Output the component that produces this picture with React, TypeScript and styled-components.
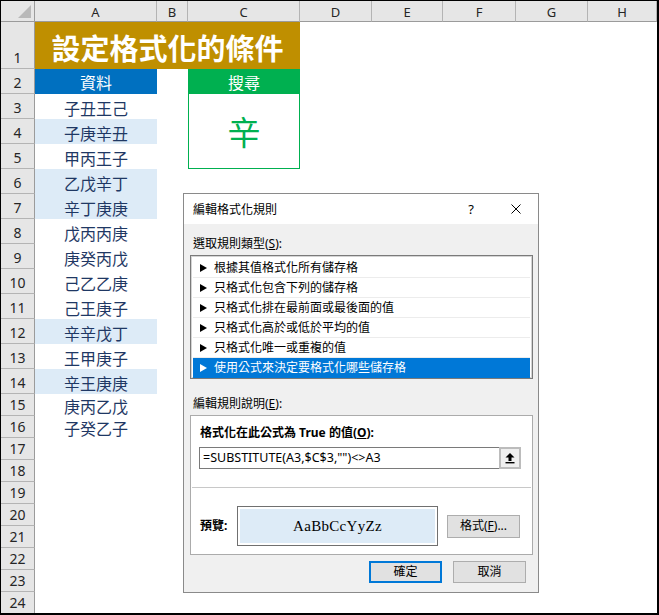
import React from "react";
import styled, { createGlobalStyle } from "styled-components";

const GlobalStyle = createGlobalStyle`
  html, body { margin: 0; padding: 0; background: #fff; }
  body { font-family: "Noto Sans", "Noto Sans CJK TC", sans-serif; }
  * { box-sizing: border-box; }
`;

const COLS = [34, 122, 31, 112, 72, 71, 73, 72, 69];
const ROWS = [21, 47, 25, ...Array(12).fill(25), ...Array(10).fill(22)];
const LETTERS = ["A", "B", "C", "D", "E", "F", "G", "H"];
const DATA = [
  "子丑王己", "子庚辛丑", "甲丙王子", "乙戊辛丁", "辛丁庚庚", "戊丙丙庚", "庚癸丙戊",
  "己乙乙庚", "己王庚子", "辛辛戊丁", "王甲庚子", "辛王庚庚", "庚丙乙戊", "子癸乙子",
];
const RULES = [
  "根據其值格式化所有儲存格",
  "只格式化包含下列的儲存格",
  "只格式化排在最前面或最後面的值",
  "只格式化高於或低於平均的值",
  "只格式化唯一或重複的值",
  "使用公式來決定要格式化哪些儲存格",
];

const CJK = `"Noto Sans CJK TC", "Noto Sans", sans-serif`;

const Frame = styled.div`
  position: relative;
  width: 659px;
  height: 615px;
  border: 1px solid #000;
  border-right-width: 2px;
  border-bottom-width: 2px;
  overflow: hidden;
  background: #fff;
`;

const Sheet = styled.div`
  display: grid;
  grid-template-columns: ${COLS.map((c) => `${c}px`).join(" ")};
  grid-template-rows: ${ROWS.map((r) => `${r}px`).join(" ")};
`;

type Place = { $c: number; $r: number; $cs?: number; $rs?: number };

const Cell = styled.div<Place>`
  grid-column: ${(p) => p.$c} / span ${(p) => p.$cs ?? 1};
  grid-row: ${(p) => p.$r} / span ${(p) => p.$rs ?? 1};
  min-width: 0;
  min-height: 0;
  display: flex;
  align-items: center;
  justify-content: center;
`;

const Corner = styled(Cell)`
  position: relative;
  background: #e6e6e6;
  border-right: 1px solid #9b9b9b;
  border-bottom: 1px solid #9b9b9b;
  align-items: flex-end;
  justify-content: flex-end;
  padding: 0 3px 3px 0;
`;

const ColHead = styled(Cell)`
  background: #e6e6e6;
  border-right: 1px solid #b4b4b4;
  border-bottom: 1px solid #9b9b9b;
  font-family: "Noto Sans", sans-serif;
  font-size: 13px;
  color: #262626;
  line-height: 16px;
  padding-top: 1px;
`;

const RowHead = styled(Cell)`
  background: #e6e6e6;
  border-right: 1px solid #9b9b9b;
  border-bottom: 1px solid #b4b4b4;
  font-family: "Noto Sans", sans-serif;
  font-size: 14px;
  color: #262626;
  line-height: 16px;
  align-items: flex-end;
  padding-bottom: 2px;
`;

const TitleCell = styled(Cell)`
  background: #bf8f00;
  color: #fff;
  font-family: ${CJK};
  font-weight: 700;
  font-size: 29px;
  line-height: 34px;
  padding-top: 2px;
`;

const HeadCell = styled(Cell)<{ $bg: string }>`
  background: ${(p) => p.$bg};
  color: #fff;
  font-family: ${CJK};
  font-size: 16px;
  line-height: 20px;
`;

const DataCell = styled(Cell)<{ $hit: boolean }>`
  background: ${(p) => (p.$hit ? "#ddebf7" : "transparent")};
  color: #1f3864;
  font-family: ${CJK};
  font-size: 16px;
  line-height: 20px;
  padding-top: 2px;
`;

const SearchBox = styled(Cell)`
  border: 1px solid #00b050;
  border-top: none;
  color: #00b050;
  font-family: ${CJK};
  font-size: 33px;
  line-height: 38px;
  padding-bottom: 1px;
`;

/* ---------- Dialog ---------- */

const Dialog = styled.div`
  position: absolute;
  left: 182px;
  top: 192px;
  width: 356px;
  height: 400px;
  border: 1px solid #8a8a8a;
  background: #f0f0f0;
  display: flex;
  flex-direction: column;
  font-family: "Noto Sans", "Noto Sans CJK TC", sans-serif;
  font-size: 12px;
  color: #000;
`;

const TitleBar = styled.div`
  height: 30px;
  flex: none;
  background: #fff;
  display: flex;
  align-items: center;
  padding: 0 17px 0 9px;
  line-height: 16px;
`;

const TitleText = styled.span`
  flex: 1;
  font-family: ${CJK};
  font-size: 12px;
`;

const HelpMark = styled.span`
  font-family: "Noto Sans", sans-serif;
  font-size: 13px;
  margin-right: 37px;
`;

const Body = styled.div`
  flex: 1;
  display: flex;
  flex-direction: column;
  padding: 0 5px 0 6px;
`;

const SectionLabel = styled.div<{ $top: number }>`
  margin-top: ${(p) => p.$top}px;
  margin-bottom: 3px;
  padding-left: 3px;
  line-height: 16px;
  height: 16px;
`;

const ListBox = styled.div`
  height: 124px;
  border: 1px solid #7a7a7a;
  box-shadow: inset 0 0 0 1px #d4d4d4;
  background: #fff;
  padding: 2px;
  display: flex;
  flex-direction: column;
`;

const RuleItem = styled.div<{ $sel: boolean }>`
  height: 20px;
  flex: none;
  display: flex;
  align-items: center;
  padding-left: 7px;
  line-height: 16px;
  background: ${(p) => (p.$sel ? "#0078d7" : "transparent")};
  color: ${(p) => (p.$sel ? "#fff" : "#000")};
  border-bottom: 1px solid ${(p) => (p.$sel ? "#0078d7" : "#ececec")};
`;

const Arrow = styled.span<{ $sel: boolean }>`
  width: 0;
  height: 0;
  border-top: 4px solid transparent;
  border-bottom: 4px solid transparent;
  border-left: 7px solid ${(p) => (p.$sel ? "#fff" : "#000")};
  margin-right: 7px;
  flex: none;
`;

const RuleBox = styled.div`
  height: 140px;
  flex: none;
  border: 1px solid #ababab;
  background: #fff;
  padding-top: 9px;
  display: flex;
  flex-direction: column;
`;

const BoldLabel = styled.div`
  padding-left: 9px;
  line-height: 16px;
  font-weight: 700;
`;

const FormulaField = styled.div`
  margin: 6px 11px 0 8px;
  height: 22px;
  border: 1px solid #7a7a7a;
  display: flex;
  align-items: stretch;
`;

const FormulaText = styled.div`
  flex: 1;
  padding-left: 3px;
  display: flex;
  align-items: center;
  font-family: "Noto Sans", sans-serif;
  font-size: 12.5px;
  line-height: 16px;
`;

const UpButton = styled.div`
  width: 22px;
  margin: -1px -1px -1px 0;
  border: 2px solid #bcbcbc;
  background: #efefef;
  display: flex;
  align-items: center;
  justify-content: center;
`;

const Separator = styled.div`
  height: 1px;
  margin: 18px 1px 0;
  background: #c8c8c8;
`;

const PreviewRow = styled.div`
  margin-top: 18px;
  height: 40px;
  display: flex;
  align-items: center;
  padding-left: 9px;
`;

const PreviewLabel = styled.span`
  width: 37px;
  font-weight: 700;
  line-height: 16px;
`;

const PreviewBox = styled.div`
  width: 201px;
  height: 40px;
  border: 1px solid #707070;
  padding: 2px;
  background: #fff;
`;

const PreviewFill = styled.div`
  height: 100%;
  background: #ddebf7;
  display: flex;
  align-items: center;
  justify-content: center;
  font-family: "Liberation Serif", serif;
  font-size: 15px;
  letter-spacing: 0.3px;
  color: #000;
`;

const PushButton = styled.div<{ $primary?: boolean }>`
  width: 73px;
  height: 22px;
  flex: none;
  background: #e1e1e1;
  border: ${(p) => (p.$primary ? "2px solid #0078d7" : "1px solid #adadad")};
  display: flex;
  align-items: center;
  justify-content: center;
  line-height: 16px;
`;

const FormatButton = styled(PushButton)`
  margin-left: 9px;
  height: 23px;
`;

const ButtonRow = styled.div`
  margin-top: 6px;
  display: flex;
  justify-content: flex-end;
  gap: 11px;
  padding-right: 7px;
`;

const CloseIcon = () => (
  <svg width="10" height="10" viewBox="0 0 10 10">
    <path d="M0.5 0.5 L9.5 9.5 M9.5 0.5 L0.5 9.5" stroke="#000" strokeWidth="1" fill="none" />
  </svg>
);

const UploadIcon = () => (
  <svg width="10" height="11" viewBox="0 0 10 11">
    <path d="M0.5 4.5 L5 0 L9.5 4.5 Z" fill="#000" />
    <rect x="3.5" y="4" width="3" height="4" fill="#000" />
    <rect x="0.5" y="9" width="9" height="1.4" fill="#000" />
  </svg>
);

const CornerMark = () => (
  <svg width="13" height="13" viewBox="0 0 13 13">
    <path d="M13 0 L13 13 L0 13 Z" fill="#b9b9b9" />
  </svg>
);

export default function App() {
  return (
    <>
      <GlobalStyle />
      <Frame>
        <Sheet>
          <Corner $c={1} $r={1}>
            <CornerMark />
          </Corner>
          {LETTERS.map((l, i) => (
            <ColHead key={l} $c={i + 2} $r={1}>
              {l}
            </ColHead>
          ))}
          {Array.from({ length: 24 }, (_, i) => (
            <RowHead key={i} $c={1} $r={i + 2}>
              {i + 1}
            </RowHead>
          ))}
          <TitleCell $c={2} $r={2} $cs={3}>
            設定格式化的條件
          </TitleCell>
          <HeadCell $c={2} $r={3} $bg="#0070c0">
            資料
          </HeadCell>
          <HeadCell $c={4} $r={3} $bg="#00b050">
            搜尋
          </HeadCell>
          <SearchBox $c={4} $r={4} $rs={3}>
            辛
          </SearchBox>
          {DATA.map((d, i) => (
            <DataCell key={i} $c={2} $r={i + 4} $hit={d.includes("辛")}>
              {d}
            </DataCell>
          ))}
        </Sheet>

        <Dialog>
          <TitleBar>
            <TitleText>編輯格式化規則</TitleText>
            <HelpMark>?</HelpMark>
            <CloseIcon />
          </TitleBar>
          <Body>
            <SectionLabel $top={12}>
              選取規則類型(<u>S</u>):
            </SectionLabel>
            <ListBox>
              {RULES.map((r, i) => (
                <RuleItem key={r} $sel={i === RULES.length - 1}>
                  <Arrow $sel={i === RULES.length - 1} />
                  {r}
                </RuleItem>
              ))}
            </ListBox>
            <SectionLabel $top={17}>
              編輯規則說明(<u>E</u>):
            </SectionLabel>
            <RuleBox>
              <BoldLabel>
                格式化在此公式為 True 的值(<u>O</u>):
              </BoldLabel>
              <FormulaField>
                <FormulaText>=SUBSTITUTE(A3,$C$3,"")&lt;&gt;A3</FormulaText>
                <UpButton>
                  <UploadIcon />
                </UpButton>
              </FormulaField>
              <Separator />
              <PreviewRow>
                <PreviewLabel>預覽:</PreviewLabel>
                <PreviewBox>
                  <PreviewFill>AaBbCcYyZz</PreviewFill>
                </PreviewBox>
                <FormatButton>
                  格式(<u>F</u>)...
                </FormatButton>
              </PreviewRow>
            </RuleBox>
            <ButtonRow>
              <PushButton $primary>確定</PushButton>
              <PushButton>取消</PushButton>
            </ButtonRow>
          </Body>
        </Dialog>
      </Frame>
    </>
  );
}
